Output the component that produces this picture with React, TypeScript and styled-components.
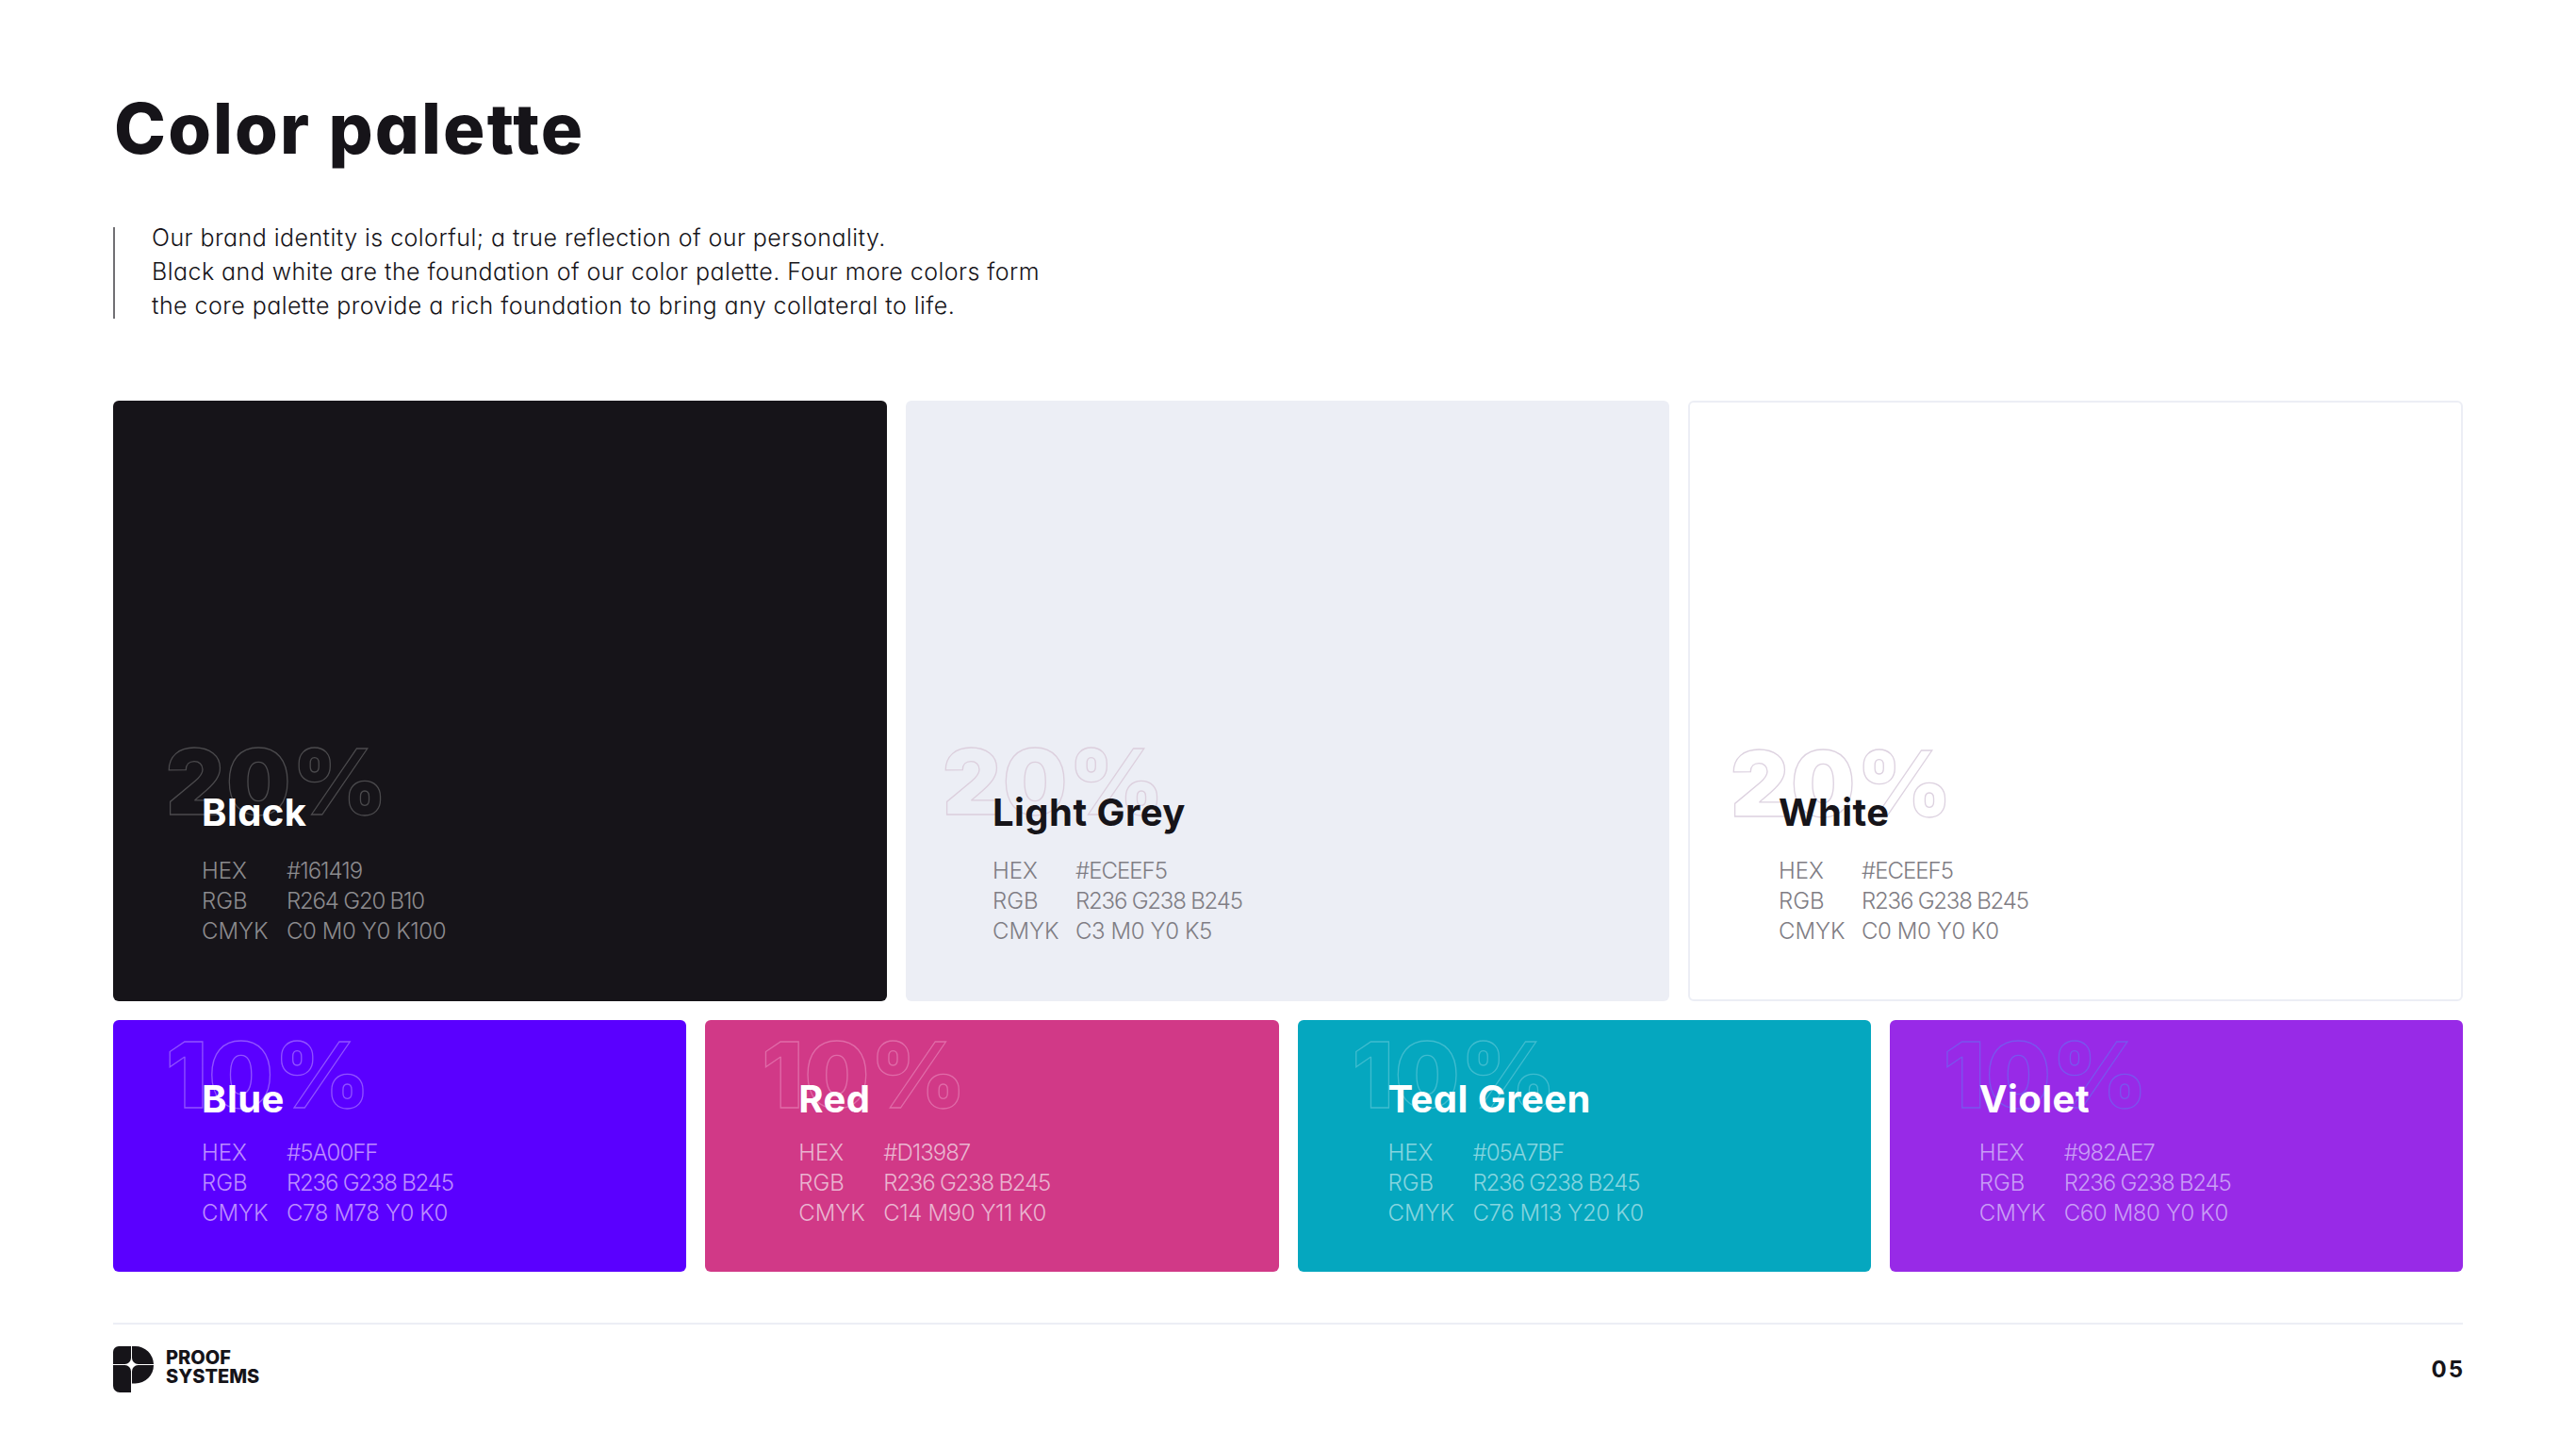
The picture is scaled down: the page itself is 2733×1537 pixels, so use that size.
import React from 'react';
import styled, { createGlobalStyle } from 'styled-components';

const FONT = `Inter, "Liberation Sans", sans-serif`;

interface ISwatch {
  name: string;
  percent: string;
  hex: string;
  rgb: string;
  cmyk: string;
  bg: string;
  fg: string;
  muted: string;
  outline: string;
  padLeft: number;
  percentLeft: number;
  labelWidth: number;
  bordered?: boolean;
}

const TOP_ROW: ISwatch[] = [
  {
    name: 'Black',
    percent: '20%',
    hex: '#161419',
    rgb: 'R264 G20 B10',
    cmyk: 'C0 M0 Y0 K100',
    bg: '#161419',
    fg: '#ffffff',
    muted: '#8c8b8e',
    outline: '#4b4a4d',
    padLeft: 94,
    percentLeft: 56,
    labelWidth: 90,
  },
  {
    name: 'Light Grey',
    percent: '20%',
    hex: '#ECEEF5',
    rgb: 'R236 G238 B245',
    cmyk: 'C3 M0 Y0 K5',
    bg: '#eceef5',
    fg: '#161419',
    muted: '#7f7d84',
    outline: '#dccfdd',
    padLeft: 92,
    percentLeft: 39,
    labelWidth: 88,
  },
  {
    name: 'White',
    percent: '20%',
    hex: '#ECEEF5',
    rgb: 'R236 G238 B245',
    cmyk: 'C0 M0 Y0 K0',
    bg: '#ffffff',
    fg: '#161419',
    muted: '#7f7d84',
    outline: '#ddd2e0',
    padLeft: 96,
    percentLeft: 43,
    labelWidth: 88,
    bordered: true,
  },
];

const BOTTOM_ROW: ISwatch[] = [
  {
    name: 'Blue',
    percent: '10%',
    hex: '#5A00FF',
    rgb: 'R236 G238 B245',
    cmyk: 'C78 M78 Y0 K0',
    bg: '#5a00ff',
    fg: '#ffffff',
    muted: '#bd8dff',
    outline: '#9152ff',
    padLeft: 94,
    percentLeft: 56,
    labelWidth: 90,
  },
  {
    name: 'Red',
    percent: '10%',
    hex: '#D13987',
    rgb: 'R236 G238 B245',
    cmyk: 'C14 M90 Y11 K0',
    bg: '#d13987',
    fg: '#ffffff',
    muted: '#eab4d0',
    outline: '#e06ba8',
    padLeft: 99,
    percentLeft: 60,
    labelWidth: 90,
  },
  {
    name: 'Teal Green',
    percent: '10%',
    hex: '#05A7BF',
    rgb: 'R236 G238 B245',
    cmyk: 'C76 M13 Y20 K0',
    bg: '#05a7bf',
    fg: '#ffffff',
    muted: '#86d5df',
    outline: '#3fbccf',
    padLeft: 96,
    percentLeft: 58,
    labelWidth: 90,
  },
  {
    name: 'Violet',
    percent: '10%',
    hex: '#982AE7',
    rgb: 'R236 G238 B245',
    cmyk: 'C60 M80 Y0 K0',
    bg: '#982ae7',
    fg: '#ffffff',
    muted: '#c99df6',
    outline: '#7a55ee',
    padLeft: 95,
    percentLeft: 57,
    labelWidth: 90,
  },
];

const Logo = () => (
  <svg width="43" height="49" viewBox="0 0 43 49" fill="#161419">
    <path d="M6 0H19V12.5A6.5 6.5 0 0 1 12.5 19H0V6A6 6 0 0 1 6 0Z" />
    <path d="M20 0H23.5A19.5 19.5 0 0 1 43 19H26.5A6.5 6.5 0 0 1 20 12.5Z" />
    <path d="M0 20H12.5A6.5 6.5 0 0 1 19 26.5V49H7A7 7 0 0 1 0 42Z" />
    <path d="M20 26.5A6.5 6.5 0 0 1 26.5 20H43A19.5 19.5 0 0 1 23.5 39.5H20Z" />
  </svg>
);

const SwatchCard: React.FC<{ swatch: ISwatch; compact?: boolean }> = ({
  swatch,
  compact,
}) => (
  <Card
    $bg={swatch.bg}
    $fg={swatch.fg}
    $bordered={swatch.bordered}
    $padLeft={swatch.padLeft}
    $compact={compact}
  >
    <Percent
      $outline={swatch.outline}
      $left={swatch.percentLeft}
      $compact={compact}
    >
      {swatch.percent}
    </Percent>
    <SwatchName $compact={compact}>{swatch.name}</SwatchName>
    <Specs $muted={swatch.muted} $labelWidth={swatch.labelWidth}>
      <span>HEX</span>
      <SpecValue $tracking={-1}>{swatch.hex}</SpecValue>
      <span>RGB</span>
      <SpecValue $tracking={-1.2}>{swatch.rgb}</SpecValue>
      <span>CMYK</span>
      <SpecValue $tracking={-0.4}>{swatch.cmyk}</SpecValue>
    </Specs>
  </Card>
);

export default function App() {
  return (
    <Page>
      <GlobalStyle />
      <Title>Color palette</Title>
      <Intro>
        <IntroText>
          Our brand identity is colorful; a true reflection of our personality.
          <br />
          Black and white are the foundation of our color palette. Four more
          colors form
          <br />
          the core palette provide a rich foundation to bring any collateral to
          life.
        </IntroText>
      </Intro>
      <TopGrid>
        {TOP_ROW.map(swatch => (
          <SwatchCard key={swatch.name} swatch={swatch} />
        ))}
      </TopGrid>
      <BottomGrid>
        {BOTTOM_ROW.map(swatch => (
          <SwatchCard key={swatch.name} swatch={swatch} compact />
        ))}
      </BottomGrid>
      <Footer>
        <Brand>
          <Logo />
          <Wordmark>
            PROOF
            <br />
            SYSTEMS
          </Wordmark>
        </Brand>
        <PageNumber>05</PageNumber>
      </Footer>
    </Page>
  );
}

const GlobalStyle = createGlobalStyle`
  html, body {
    margin: 0;
    padding: 0;
    background: #ffffff;
  }
  body {
    font-family: ${FONT};
    font-feature-settings: 'cv11' 1;
    color: #161419;
  }
`;

const Page = styled.div`
  box-sizing: border-box;
  width: 2733px;
  height: 1537px;
  padding: 0 120px;
  overflow: hidden;
  background: #ffffff;
`;

const Title = styled.h1`
  margin: 0 0 0 1px;
  padding-top: 91px;
  font-size: 74px;
  line-height: 90px;
  font-weight: 800;
  letter-spacing: 2.1px;
`;

const Intro = styled.div`
  margin: 60px 0 0;
  padding-left: 39px;
  border-left: 2px solid #717074;
  height: 97px;
`;

const IntroText = styled.p`
  margin: 0;
  position: relative;
  top: -7px;
  font-size: 25px;
  line-height: 36px;
  font-weight: 300;
  letter-spacing: 0.45px;
`;

const TopGrid = styled.div`
  display: grid;
  grid-template-columns: 821px 810px 822px;
  gap: 20px;
  height: 637px;
  margin-top: 87px;
`;

const BottomGrid = styled.div`
  display: grid;
  grid-template-columns: repeat(4, 1fr);
  gap: 20px;
  height: 267px;
  margin-top: 20px;
`;

const Card = styled.section<{
  $bg: string;
  $fg: string;
  $bordered?: boolean;
  $padLeft: number;
  $compact?: boolean;
}>`
  position: relative;
  box-sizing: border-box;
  display: flex;
  flex-direction: column;
  justify-content: flex-end;
  padding: 0 0 ${props => (props.$compact ? 46 : 58) - (props.$bordered ? 2 : 0)}px
    ${props => props.$padLeft - (props.$bordered ? 2 : 0)}px;
  border-radius: 6px;
  background: ${props => props.$bg};
  color: ${props => props.$fg};
  border: ${props => (props.$bordered ? '2px solid #eceef5' : '0')};
`;

const Percent = styled.div<{
  $outline: string;
  $left: number;
  $compact?: boolean;
}>`
  position: absolute;
  left: ${props => props.$left}px;
  top: ${props => (props.$compact ? 0 : 346)}px;
  font-size: 96px;
  line-height: 116px;
  font-weight: 900;
  letter-spacing: 2px;
  color: transparent;
  -webkit-text-stroke: 1.3px ${props => props.$outline};
`;

const SwatchName = styled.h2<{ $compact?: boolean }>`
  position: relative;
  margin: 0 0 ${props => (props.$compact ? 17 : 22)}px;
  font-size: 40px;
  line-height: 48px;
  font-weight: 700;
  letter-spacing: 0.45px;
`;

const Specs = styled.div<{ $muted: string; $labelWidth: number }>`
  position: relative;
  display: grid;
  grid-template-columns: ${props => props.$labelWidth}px auto;
  justify-content: start;
  font-size: 24px;
  line-height: 32px;
  font-weight: 300;
  color: ${props => props.$muted};
`;

const SpecValue = styled.span<{ $tracking: number }>`
  letter-spacing: ${props => props.$tracking}px;
`;

const Footer = styled.footer`
  display: flex;
  align-items: center;
  justify-content: space-between;
  margin-top: 54px;
  padding-top: 23px;
  border-top: 2px solid #eceef5;
`;

const Brand = styled.div`
  display: flex;
  align-items: flex-start;
  gap: 13px;
`;

const Wordmark = styled.div`
  padding-top: 2px;
  font-size: 20px;
  line-height: 20px;
  font-weight: 800;
  color: #161419;
`;

const PageNumber = styled.div`
  font-size: 24px;
  font-weight: 700;
  letter-spacing: 2px;
  margin-right: -2px;
`;
